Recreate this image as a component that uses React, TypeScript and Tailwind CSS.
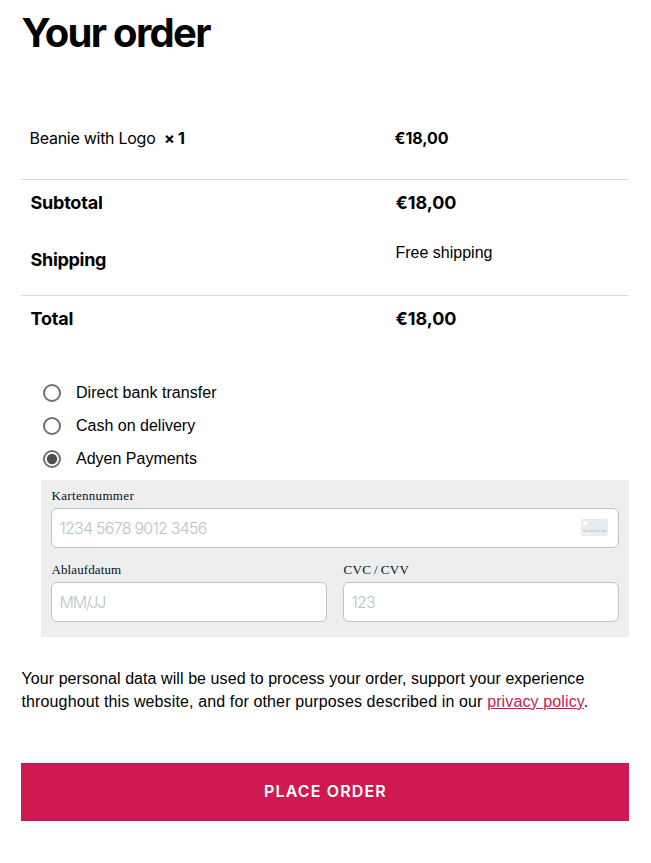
import type { ReactNode } from "react";

const inter = "font-['Inter',sans-serif]";
const helvetica = "font-['Liberation_Sans',sans-serif]";

function Row({ label, children, className }: { label: ReactNode; children: ReactNode; className: string }) {
  return (
    <div className={`grid grid-cols-[365px_1fr] ${className}`}>
      <div>{label}</div>
      <div>{children}</div>
    </div>
  );
}

function PaymentOption({ label, labelClass, checked = false }: { label: string; labelClass: string; checked?: boolean }) {
  return (
    <label className={`flex h-[33px] items-center gap-[14px] text-[16px] ${helvetica}`}>
      <svg width="20" height="20" viewBox="0 0 20 20" fill="none">
        <circle cx="10" cy="10" r="8" stroke="#707070" strokeWidth="2" />
        {checked && <circle cx="10" cy="10" r="5.2" fill="#4f4f4f" />}
      </svg>
      <span className={labelClass}>{label}</span>
    </label>
  );
}

function CardIcon() {
  return (
    <svg className="-mt-[2px]" width="27" height="17" viewBox="0 0 27 17">
      <rect width="27" height="17" rx="2" fill="#e6ebef" />
      <rect x="2" y="2" width="4" height="4" rx="0.5" fill="#fff" />
      <path d="M2 12h5M8 12h5M14 12h5M20 12h5" stroke="#c9d7e0" strokeWidth="2" />
      <path d="M2 14.5h9" stroke="#fff" strokeWidth="1" />
    </svg>
  );
}

function Field({ label, placeholder, labelClass, textClass, icon }: { label: string; placeholder: string; labelClass: string; textClass: string; icon?: ReactNode }) {
  return (
    <div className="min-w-0 flex-1">
      <div className="h-[18px] pl-[0.5px] font-['Liberation_Serif',serif] text-[13px] leading-[18px] text-[#00112c]">
        <span className={labelClass}>{label}</span>
      </div>
      <div className={`mt-[3px] flex h-[40px] items-center justify-between rounded-[6px] border border-[#b9c4c9] bg-white pr-[10px] pl-[7.5px] text-[16px] font-light text-[#b9c4c9] ${inter}`}>
        <span className={textClass}>{placeholder}</span>
        {icon}
      </div>
    </div>
  );
}

export default function App() {
  return (
    <main className="h-[863px] w-[651px] bg-white pr-[22px] pl-[21px] pt-[8px] text-black">
      <h1 className={`h-[50px] pl-[0.5px] text-[40px] leading-[50px] font-bold tracking-[-1.7px] ${inter}`}>Your order</h1>

      <section className={`mt-[60px] ${inter}`}>
        <Row
          className="h-[62px] border-b border-[#dcdcdc] pl-[8.5px] pt-[8px] text-[16px] leading-[24px]"
          label={<><span className="tracking-[-0.27px]">Beanie with Logo</span> <strong className="ml-[4px] font-bold tracking-[-0.3px]">× 1</strong></>}
        >
          <strong className="font-bold tracking-[-0.05px]">€18,00</strong>
        </Row>
        <Row className="h-[57px] pl-[9.5px] pt-[11px] text-[18px] leading-[24px] font-bold" label={<span className="tracking-[-0.22px]">Subtotal</span>}>
          <span className="tracking-[-0.05px]">€18,00</span>
        </Row>
        <Row className="h-[59px] border-b border-[#dcdcdc] pl-[9.5px] pt-[11px] text-[18px] leading-[24px] font-bold" label={<span className="tracking-[-0.3px]">Shipping</span>}>
          <span className={`-mt-[7px] block text-[16px] font-normal ${helvetica}`}>Free shipping</span>
        </Row>
        <Row className="h-[80px] pl-[9.5px] pt-[11px] text-[18px] leading-[24px] font-bold" label={<span className="tracking-[-0.22px]">Total</span>}>
          <span className="tracking-[-0.05px]">€18,00</span>
        </Row>
      </section>

      <section>
        <div className="pl-[21px]">
          <PaymentOption label="Direct bank transfer" labelClass="tracking-[0.05px]" />
          <PaymentOption label="Cash on delivery" labelClass="tracking-normal" />
          <PaymentOption label="Adyen Payments" labelClass="tracking-normal" checked />
        </div>
        <div className="mt-[5px] ml-[20px] flex h-[157px] flex-col gap-[13px] bg-[#eeeeee] px-[10px] pt-[7px]">
          <div className="flex flex-none">
            <Field label="Kartennummer" placeholder="1234 5678 9012 3456" labelClass="tracking-[0.32px]" textClass="tracking-[-0.76px]" icon={<CardIcon />} />
          </div>
          <div className="flex flex-none gap-[16px]">
            <Field label="Ablaufdatum" placeholder="MM/JJ" labelClass="tracking-[0.1px]" textClass="tracking-[-1.2px]" />
            <Field label="CVC / CVV" placeholder="123" labelClass="tracking-[0.4px] [word-spacing:-1px]" textClass="tracking-[-0.8px]" />
          </div>
        </div>
      </section>

      <p className={`mt-[30px] pl-[0.5px] text-[16px] leading-[23px] whitespace-nowrap ${helvetica}`}>
        <span className="tracking-[0.075px]">Your personal data will be used to process your order, support your experience</span>
        <br />
        <span className="tracking-[0.13px]">throughout this website, and for other purposes described in our <a className="text-[#d01950] underline">privacy policy</a>.</span>
      </p>

      <button className={`mt-[50px] block h-[58px] w-full bg-[#d01950] pb-[2px] pl-[1px] text-[16px] font-semibold tracking-[1.15px] text-white ${inter}`}>
        PLACE ORDER
      </button>
    </main>
  );
}
